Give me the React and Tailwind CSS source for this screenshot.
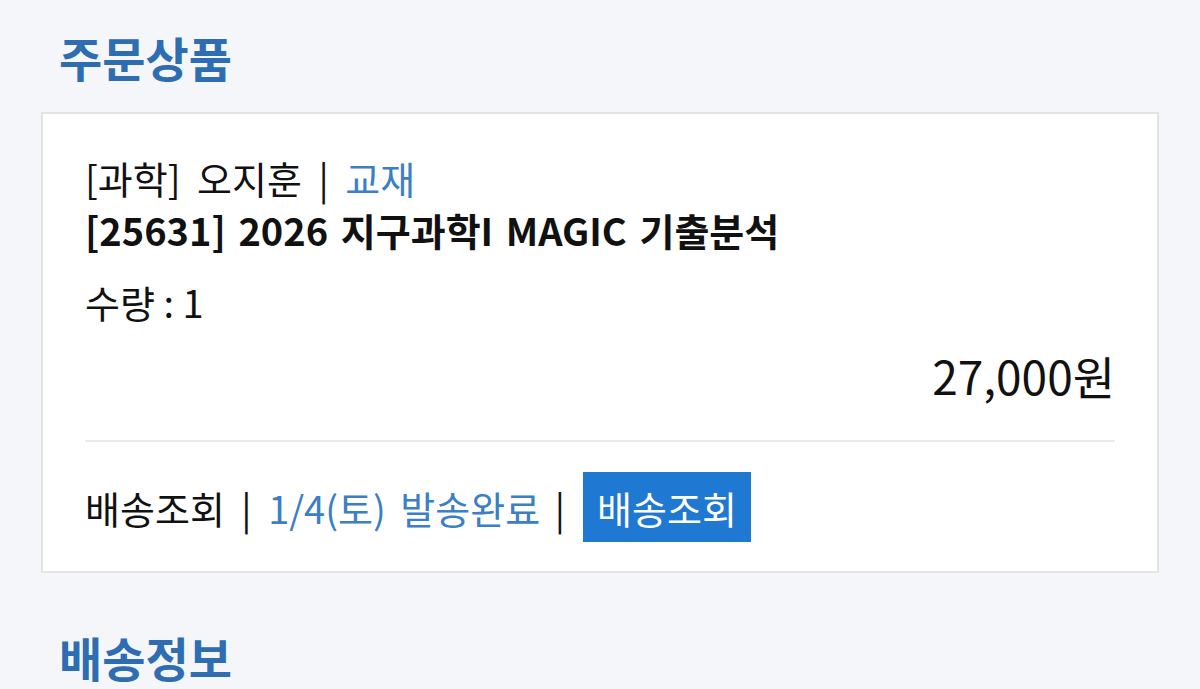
export default function App() {
  return (
    <div
      className="min-h-[689px] bg-[#f5f6fa] px-[41px] pt-[22px] text-[#111]"
      style={{ fontFamily: '"Noto Sans CJK KR", "Noto Sans", sans-serif' }}
    >
      {/* 주문상품 */}
      <h2 className="pl-[18px] text-[47px] font-bold leading-[70px] text-[#2f6db3]">주문상품</h2>

      <div className="mt-[20px] border-2 border-[#e4e4e6] bg-white px-[42px] pt-[38px] pb-[29px]">
        <p className="text-[38px] leading-[52px] [word-spacing:8px]">
          [과학] 오지훈 | <span className="text-[#3b7fc4]">교재</span>
        </p>
        <p className="text-[38px] font-semibold leading-[52px] [word-spacing:4px]">[25631] 2026 지구과학I MAGIC 기출분석</p>
        <p className="mt-[21px] text-[38px] leading-[50px]">수량 : 1</p>
        <p className="mt-[20px] text-right text-[46px] leading-[56px]">27,000원</p>

        <div className="mt-[37px] h-[2px] bg-[#ebebeb]" />

        <div className="mt-[30px] flex items-center text-[38px]">
          <span className="whitespace-pre [word-spacing:8px]">배송조회 | </span>
          <span className="whitespace-pre text-[#3b7fc4] [word-spacing:6px]">1/4(토) 발송완료 </span>
          <span>|</span>
          <button className="ml-[18px] h-[70px] w-[168px] bg-[#1f78d1] text-[38px] text-white">배송조회</button>
        </div>
      </div>

      {/* 배송정보 */}
      <h2 className="mt-[52px] pl-[18px] text-[47px] font-bold leading-[64px] text-[#2f6db3]">배송정보</h2>
    </div>
  );
}
